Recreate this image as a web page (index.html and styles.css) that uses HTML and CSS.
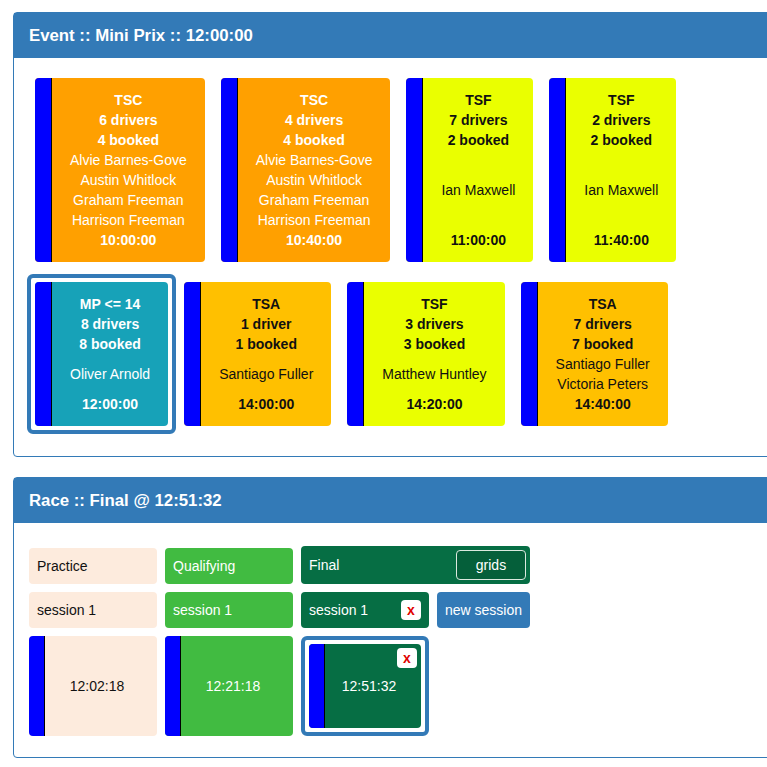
FILE: index.html
```html
<!DOCTYPE html>
<html lang="en">
<head>
  <meta charset="UTF-8" />
  <meta name="viewport" content="width=device-width, initial-scale=1.0" />
  <title>Event :: Mini Prix</title>
  <link rel="stylesheet" href="styles.css">
</head>
<body>
  <div class="panel">
    <div class="panel-heading">Event :: Mini Prix :: 12:00:00</div>
    <div class="panel-body event-body">
      <div class="heats">
        <div class="slot">
          <div class="heat tsc">
            <div class="strip"></div>
            <div class="heat-body">
              <div class="bold">TSC</div>
              <div class="bold">6 drivers</div>
              <div class="bold">4 booked</div>
              <div class="names">
                <div>Alvie Barnes-Gove</div>
                <div>Austin Whitlock</div>
                <div>Graham Freeman</div>
                <div>Harrison Freeman</div>
              </div>
              <div class="bold">10:00:00</div>
            </div>
          </div>
        </div>
        <div class="slot">
          <div class="heat tsc">
            <div class="strip"></div>
            <div class="heat-body">
              <div class="bold">TSC</div>
              <div class="bold">4 drivers</div>
              <div class="bold">4 booked</div>
              <div class="names">
                <div>Alvie Barnes-Gove</div>
                <div>Austin Whitlock</div>
                <div>Graham Freeman</div>
                <div>Harrison Freeman</div>
              </div>
              <div class="bold">10:40:00</div>
            </div>
          </div>
        </div>
        <div class="slot">
          <div class="heat tsf">
            <div class="strip"></div>
            <div class="heat-body">
              <div class="bold">TSF</div>
              <div class="bold">7 drivers</div>
              <div class="bold">2 booked</div>
              <div class="names">
                <div>Ian Maxwell</div>
              </div>
              <div class="bold">11:00:00</div>
            </div>
          </div>
        </div>
        <div class="slot">
          <div class="heat tsf">
            <div class="strip"></div>
            <div class="heat-body">
              <div class="bold">TSF</div>
              <div class="bold">2 drivers</div>
              <div class="bold">2 booked</div>
              <div class="names">
                <div>Ian Maxwell</div>
              </div>
              <div class="bold">11:40:00</div>
            </div>
          </div>
        </div>
        <div class="slot active">
          <div class="heat mp">
            <div class="strip"></div>
            <div class="heat-body">
              <div class="bold">MP &lt;= 14</div>
              <div class="bold">8 drivers</div>
              <div class="bold">8 booked</div>
              <div class="names">
                <div>Oliver Arnold</div>
              </div>
              <div class="bold">12:00:00</div>
            </div>
          </div>
        </div>
        <div class="slot">
          <div class="heat tsa">
            <div class="strip"></div>
            <div class="heat-body">
              <div class="bold">TSA</div>
              <div class="bold">1 driver</div>
              <div class="bold">1 booked</div>
              <div class="names">
                <div>Santiago Fuller</div>
              </div>
              <div class="bold">14:00:00</div>
            </div>
          </div>
        </div>
        <div class="slot">
          <div class="heat tsf">
            <div class="strip"></div>
            <div class="heat-body">
              <div class="bold">TSF</div>
              <div class="bold">3 drivers</div>
              <div class="bold">3 booked</div>
              <div class="names">
                <div>Matthew Huntley</div>
              </div>
              <div class="bold">14:20:00</div>
            </div>
          </div>
        </div>
        <div class="slot">
          <div class="heat tsa">
            <div class="strip"></div>
            <div class="heat-body">
              <div class="bold">TSA</div>
              <div class="bold">7 drivers</div>
              <div class="bold">7 booked</div>
              <div class="names">
                <div>Santiago Fuller</div>
                <div>Victoria Peters</div>
              </div>
              <div class="bold">14:40:00</div>
            </div>
          </div>
        </div>
      </div>
    </div>
  </div>

  <div class="panel">
    <div class="panel-heading">Race :: Final @ 12:51:32</div>
    <div class="panel-body race-body">
      <div class="race-grid">
        <div class="stage practice">Practice</div>
        <div class="stage qualifying">Qualifying</div>
        <div class="stage final final-head">
          <span>Final</span>
          <button class="grids-btn">grids</button>
        </div>

        <div class="stage practice">session 1</div>
        <div class="stage qualifying">session 1</div>
        <div class="stage final session-row">
          <span>session 1</span>
          <span class="close-btn">x</span>
        </div>
        <button class="new-session">new session</button>

        <div class="run practice">
          <div class="strip"></div>
          <div class="run-time">12:02:18</div>
        </div>
        <div class="run qualifying">
          <div class="strip"></div>
          <div class="run-time">12:21:18</div>
        </div>
        <div class="run-slot">
          <div class="run final">
            <div class="strip"></div>
            <div class="run-time">12:51:32</div>
            <span class="close-btn corner">x</span>
          </div>
        </div>
      </div>
    </div>
  </div>
</body>
</html>
```

FILE: styles.css
```css
html, body {
  overflow: hidden;
}
body {
  margin: 0;
  padding: 12px 0 0 13px;
  font-family: "Liberation Sans", Arial, Helvetica, sans-serif;
  font-size: 14px;
  color: #222;
  background: #fff;
}
.panel {
  width: 790px;
  border: 1px solid #337ab7;
  border-radius: 4px;
  margin-bottom: 20px;
}
.panel-heading {
  background-color: #337ab7;
  color: #fff;
  height: 45px;
  padding: 0 15px;
  display: flex;
  align-items: center;
  font-size: 16.8px;
  font-weight: bold;
}
.event-body {
  padding: 12px 13px 22px;
}
.heats {
  display: flex;
  flex-wrap: wrap;
  row-gap: 4px;
}
.slot {
  display: flex;
  border: 4px solid transparent;
  padding: 4px;
  border-radius: 6px;
}
.slot.active {
  border-color: #337ab7;
}
.heat {
  display: flex;
  flex: 1;
  border-radius: 4px;
  overflow: hidden;
}
.strip {
  width: 15px;
  flex: none;
  background-color: #0000ff;
  border-right: 1px solid #000;
}
.heat .strip {
  width: 16px;
}
.heat-body {
  flex: 1;
  display: flex;
  flex-direction: column;
  padding: 12px 18px;
  text-align: center;
  line-height: 20px;
  white-space: nowrap;
}
.bold {
  font-weight: bold;
}
.names {
  flex: 1;
  display: flex;
  flex-direction: column;
  justify-content: center;
}
.tsc {
  background-color: #ffa000;
  color: #fff;
}
.tsf {
  background-color: #eaff00;
  color: #111;
}
.tsa {
  background-color: #ffc000;
  color: #111;
}
.mp {
  background-color: #17a2b8;
  color: #fff;
}

/* race */
.race-body {
  padding: 23px 15px 21px;
}
.race-grid {
  display: grid;
  grid-template-columns: 128px 128px 128px 93px;
  gap: 8px;
  align-items: end;
}
.stage {
  height: 36px;
  padding: 0 8px;
  border-radius: 4px;
  display: flex;
  align-items: center;
  justify-content: space-between;
}
.practice {
  background-color: #fdebdd;
  color: #111;
}
.qualifying {
  background-color: #41bb41;
  color: #fff;
}
.final {
  background-color: #066e44;
  color: #fff;
}
.final-head {
  grid-column: span 2;
  height: 38px;
  padding: 0 4px 0 8px;
}
.grids-btn {
  width: 70px;
  height: 30px;
  background-color: #055f3a;
  color: #fff;
  border: 1px solid #dbe9df;
  border-radius: 4px;
  font-family: inherit;
  font-size: 14px;
}
.close-btn {
  width: 20px;
  height: 20px;
  background: #fff;
  border-radius: 4px;
  color: #e00000;
  font-weight: bold;
  font-size: 14px;
  display: flex;
  align-items: center;
  justify-content: center;
  line-height: 1;
}
.new-session {
  height: 36px;
  background-color: #337ab7;
  color: #fff;
  border: none;
  border-radius: 4px;
  font-family: inherit;
  font-size: 14px;
  padding: 0;
}
.run {
  height: 100px;
  display: flex;
  border-radius: 4px;
  overflow: hidden;
  position: relative;
}
.run-time {
  flex: 1;
  display: flex;
  align-items: center;
  justify-content: center;
  padding-right: 8px;
}
.run-slot {
  border: 4px solid #337ab7;
  border-radius: 6px;
  padding: 4px;
}
.run-slot .run {
  height: 84px;
}
.corner {
  position: absolute;
  top: 4px;
  right: 4px;
}
```
